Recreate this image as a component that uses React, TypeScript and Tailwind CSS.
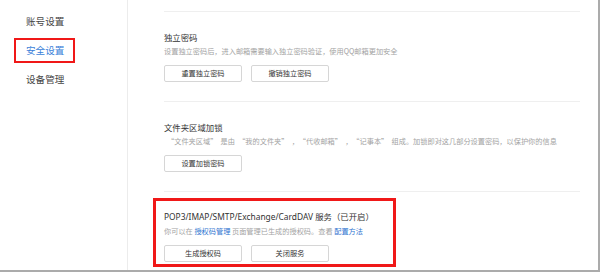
const font = { fontFamily: '"Noto Sans CJK SC", "Liberation Sans", sans-serif' };

const menu = [
  { label: "账号设置", active: false },
  { label: "安全设置", active: true },
  { label: "设备管理", active: false },
];

function Btn({ children }: { children: React.ReactNode }) {
  return (
    <button className="flex h-[17px] w-[78px] items-center justify-center rounded-[2px] border border-[#d6d6d6] bg-white text-[7.2px] leading-none text-[#333]">
      {children}
    </button>
  );
}

function Section({
  title,
  desc,
  buttons,
  last,
  latinTitle,
}: {
  title: React.ReactNode;
  desc: React.ReactNode;
  buttons: string[];
  last?: boolean;
  latinTitle?: boolean;
}) {
  return (
    <div className={`border-t border-[#efefef] pt-[19px] ${last ? "" : "pb-[19px]"}`}>
      <div
        className={`h-[12px] text-[8.4px] leading-[12px] whitespace-nowrap text-[#333] ${
          latinTitle ? "font-['Noto_Sans','Noto_Sans_CJK_SC',sans-serif]" : ""
        }`}
      >
        {title}
      </div>
      <div className="mt-[3px] h-[10px] text-[7.2px] leading-[10px] whitespace-pre text-[#a3a3a3]">{desc}</div>
      <div className="mt-[9px] flex gap-[9px]">
        {buttons.map((b) => (
          <Btn key={b}>{b}</Btn>
        ))}
      </div>
    </div>
  );
}

export default function App() {
  return (
    <div
      className="flex h-[272px] w-[600px] overflow-hidden border-r-2 border-b-2 border-[#ababab] bg-white"
      style={font}
    >
      {/* sidebar */}
      <div className="w-[128px] shrink-0 border-r border-[#ececec] pt-[7px]">
        {menu.map((m) => (
          <div key={m.label} className="relative flex h-[29px] items-center pl-[26px]">
            <span className={`text-[9.6px] leading-none ${m.active ? "text-[#3b7fd9]" : "text-[#444]"}`}>
              {m.label}
            </span>
            {m.active && (
              <span className="pointer-events-none absolute top-[2px] left-[14px] h-[25px] w-[61px] border-2 border-[#f01818]" />
            )}
          </div>
        ))}
      </div>

      {/* content */}
      <div className="flex-1 pt-[11px] pr-[18px] pl-[36px]">
        <Section
          title="独立密码"
          desc="设置独立密码后，进入邮箱需要输入独立密码验证，使用QQ邮箱更加安全"
          buttons={["重置独立密码", "撤销独立密码"]}
        />
        <Section
          title="文件夹区域加锁"
          desc={
            <span className="pl-[3px]">
              “文件夹区域”  是由  “我的文件夹”  ，　“代收邮箱”  ，　“记事本”  组成。加锁即对这几部分设置密码，以保护你的信息
            </span>
          }
          buttons={["设置加锁密码"]}
        />
        <div className="relative">
          <Section
            last
            latinTitle
            title="POP3/IMAP/SMTP/Exchange/CardDAV 服务（已开启）"
            desc={
              <>
                你可以在 <span className="text-[#2f74d0]">授权码管理</span> 页面管理已生成的授权码。查看{" "}
                <span className="text-[#2f74d0]">配置方法</span>
              </>
            }
            buttons={["生成授权码", "关闭服务"]}
          />
          <span className="pointer-events-none absolute top-[7px] left-[-11px] h-[69px] w-[243px] border-[3px] border-[#f01818]" />
        </div>
      </div>
    </div>
  );
}
